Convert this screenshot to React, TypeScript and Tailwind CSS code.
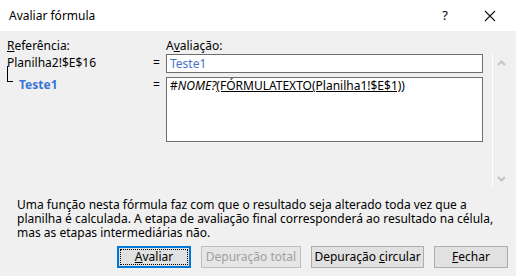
import React from 'react';

function Chevron({ up }: { up?: boolean }) {
  return (
    <svg width="9" height="6" viewBox="0 0 9 6" className="block">
      <path
        d={up ? 'M1 5 L4.5 1.5 L8 5' : 'M1 1 L4.5 4.5 L8 1'}
        fill="none"
        stroke="#c4c4c4"
        strokeWidth="2"
      />
    </svg>
  );
}

function DialogButton({
  children,
  width,
  focused,
  disabled,
}: {
  children: React.ReactNode;
  width: string;
  focused?: boolean;
  disabled?: boolean;
}) {
  if (focused) {
    return (
      <div className={`${width} h-[22px] border-2 border-[#0078d7] bg-[#e1e1e1] p-[1px]`}>
        <div className="flex h-full w-full items-center justify-center border border-dotted border-black text-black">
          {children}
        </div>
      </div>
    );
  }
  return (
    <div
      className={`${width} flex h-[22px] items-center justify-center border ${
        disabled ? 'border-[#bfbfbf] bg-[#e6e6e6] text-[#a0a0a0]' : 'border-[#adadad] bg-[#e1e1e1] text-black'
      }`}
    >
      {children}
    </div>
  );
}

export default function App() {
  return (
    <div
      className="flex h-[276px] w-[516px] flex-col overflow-hidden bg-[#f0f0f0] text-[12px] text-black"
      style={{ fontFamily: '"Noto Sans", "Open Sans", sans-serif' }}
    >
      {/* title bar */}
      <div className="flex h-[31px] shrink-0 items-center bg-white pl-[9px]">
        <span className="flex-1 text-[12px]">Avaliar fórmula</span>
        <span className="w-[12px] text-center text-[13px]">?</span>
        <svg width="12" height="12" viewBox="0 0 12 12" className="ml-[33px] mr-[20px]">
          <path d="M1 1 L11 11 M11 1 L1 11" stroke="#111" strokeWidth="1.1" />
        </svg>
      </div>

      {/* evaluation area */}
      <div className="flex h-[156px] shrink-0">
        <div className="flex flex-1 flex-col pl-[7px] pt-[7px]">
          <div className="flex h-[16px] items-start leading-[16px]">
            <span className="w-[159px]">
              <span className="underline">R</span>eferência:
            </span>
            <span>
              A<span className="underline">v</span>aliação:
            </span>
          </div>

          <div className="flex h-[19px]">
            <span className="w-[146px] pt-[2px] leading-[14px]">Planilha2!$E$16</span>
            <span className="w-[13px] pt-[1px] leading-[16px]">=</span>
            <div className="flex h-[19px] flex-1 items-center border border-[#6e6e6e] bg-white pl-[3px] text-[#4573c6]">
              Teste1
            </div>
          </div>

          <div className="mt-[4px] flex">
            <div className="relative w-[146px]">
              <div className="absolute -top-[11px] left-0 h-[16px] w-[6px] border-b border-l border-black" />
              <span className="block pl-[12px] leading-[15px] font-bold text-[#3b74d5]">Teste1</span>
            </div>
            <span className="w-[13px] leading-[15px]">=</span>
            <div className="h-[65px] flex-1 border border-[#6e6e6e] bg-white pl-[3px] leading-[15px]">
              #<i>NOME?</i>
              <span className="underline">(FÓRMULATEXTO(Planilha1!$E$1)</span>)
            </div>
          </div>
        </div>

        {/* scrollbar */}
        <div className="ml-[9px] mt-[23px] flex w-[24px] flex-col items-center justify-between border-l border-white pb-[5px] pt-[6px] pr-[6px]">
          <Chevron up />
          <Chevron />
        </div>
      </div>

      {/* notice */}
      <p className="mt-[11px] pl-[17px] leading-[14px]">
        Uma função nesta fórmula faz com que o resultado seja alterado toda vez que a
        <br />
        planilha é calculada. A etapa de avaliação final corresponderá ao resultado na célula,
        <br />
        mas as etapas intermediárias não.
      </p>

      {/* buttons */}
      <div className="mt-[6px] flex justify-end gap-[10px] pr-[8px]">
        <DialogButton width="w-[74px]" focused>
          <span>
            <span className="underline">A</span>valiar
          </span>
        </DialogButton>
        <DialogButton width="w-[100px]" disabled>
          Depuração total
        </DialogButton>
        <DialogButton width="w-[113px]">
          <span>
            Depuração <span className="underline">c</span>ircular
          </span>
        </DialogButton>
        <DialogButton width="w-[74px]">
          <span>
            <span className="underline">F</span>echar
          </span>
        </DialogButton>
      </div>
    </div>
  );
}
